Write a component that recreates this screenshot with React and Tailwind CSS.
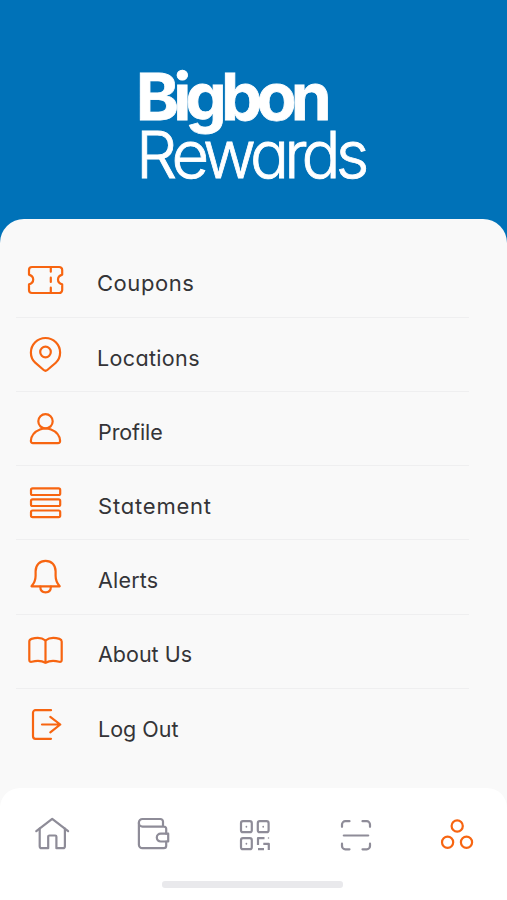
import React, { useState } from 'react';

const CouponIcon = () => (
  <>
    <path d="M6 7h27.200a3 3 0 0 1 3 3v4.600c-2.600.8-4.200 2.600-4.200 4.900s1.600 4.100 4.200 4.900v5.600a3 3 0 0 1-3 3H6a3 3 0 0 1-3-3v-5.600c2.600-.8 4.200-2.600 4.200-4.900S5.600 15.400 3 14.600V10a3 3 0 0 1 3-3z" />
    <path d="M24.800 7.700v4M24.800 17.700v4.200M24.800 27.700v4.800" />
  </>
);

const PinIcon = () => (
  <>
    <path d="M17.700 36 9.200 28.700C6.300 26.100 4.900 22.500 4.900 18.600a14.600 14.600 0 0 1 29.200 0c0 3.900-1.400 7.500-4.300 10.100L21.300 36a2.800 2.800 0 0 1-3.600 0z" />
    <circle cx="19.5" cy="18" r="5.300" />
  </>
);

const ProfileIcon = () => (
  <>
    <circle cx="19.5" cy="12.300" r="7.200" />
    <path d="M14 20.500C9 22.500 5.200 26.600 4.900 31.800c-.1 1.500.8 2.400 2.100 2.400h25c1.300 0 2.200-.9 2.100-2.400-.3-5.200-4.100-9.300-9.100-11.300-3.400-1.300-7.600-1.300-11 0z" />
  </>
);

const StatementIcon = () => (
  <>
    <rect x="5" y="5.300" width="29.200" height="6.700" rx="1.600" />
    <rect x="5" y="16.300" width="29.200" height="6.700" rx="1.600" />
    <rect x="5" y="27.500" width="29.200" height="6.700" rx="1.600" />
  </>
);

const BellIcon = () => (
  <>
    <path d="M5.500 29.300h28.200c-2.700-3-4.100-6.300-4.100-10.500v-4.600c0-6.200-4-10.400-10-10.400s-10 4.200-10 10.400v4.600c0 4.200-1.400 7.500-4.100 10.500z" />
    <path d="M14.300 29.500c0 3.700 2 5.800 5.300 5.800s5.300-2.100 5.300-5.800" />
  </>
);

const BookIcon = () => (
  <>
    <path d="M19.500 9.500C16 6.600 10 6.400 5.500 7.900c-1.400.5-2.200 1.200-2.200 2.700v18.300c0 1.600 1 2.200 2.500 1.800 4.700-1.300 9.700-1.300 13.700 1 4-2.300 9-2.300 13.700-1 1.500.4 2.500-.2 2.500-1.800V10.600c0-1.500-.8-2.200-2.200-2.700C29 6.400 23 6.600 19.500 9.500z" />
    <path d="M19.500 9.500v22" />
  </>
);

const LogoutIcon = () => (
  <>
    <path d="M25 5.200H9.500A2.500 2.500 0 0 0 7 7.700v23.600a2.500 2.500 0 0 0 2.500 2.500H25" />
    <path d="M16 19.500h18M24.300 11.800l10 7.700-10 7.800" />
  </>
);

const HomeIcon = () => (
  <>
    <path d="M4.300 17.200 20.200 4.800l15.900 12.400" />
    <path d="M7.700 14.700v17.500a2 2 0 0 0 2 2h6.500V22.700a1.200 1.200 0 0 1 1.200-1.200h5.800a1.200 1.200 0 0 1 1.200 1.200v11.500h6.500a2 2 0 0 0 2-2V14.700" />
  </>
);

const WalletIcon = () => (
  <>
    <path d="M33.200 19.700v-4.900a2.200 2.200 0 0 0-2.200-2.200H9.500a3.600 3.600 0 0 1-3.600-3.600v-.5A3.500 3.500 0 0 1 9.400 5h18a2.600 2.600 0 0 1 2.600 2.600v4.800" />
    <path d="M5.900 9v21.700a3.500 3.500 0 0 0 3.500 3.500h21.400a2.400 2.400 0 0 0 2.400-2.400v-4.300" />
    <path d="M35.200 19.700h-7.500a3.900 3.900 0 0 0 0 7.800h7.500z" />
  </>
);

const QrIcon = () => (
  <>
    <rect x="7" y="7.200" width="10.800" height="11" rx="2" />
    <rect x="23.800" y="7.200" width="10.800" height="11" rx="2" />
    <rect x="7" y="24.200" width="10.800" height="11" rx="2" />
    <path d="M12.400 12.600v.2M29.200 12.600v.2M12.400 29.600v.2" strokeWidth="1.700" />
    <path d="M24 31v-6.800h6.500M24 35.200h6M29.300 29.900h5.500v6.200" strokeLinecap="butt" />
    <path d="M34.500 23.900v.1" strokeWidth="1.500" />
  </>
);

const ScanIcon = () => (
  <>
    <path d="M7 12.800v-2.300A3.300 3.300 0 0 1 10.300 7.200h4.200M27.500 7.200h4.200A3.300 3.300 0 0 1 35 10.500v2.300M7 29.700V32a3.300 3.300 0 0 0 3.300 3.300h4.200M27.500 35.300h4.200A3.300 3.300 0 0 0 35 32v-2.300" />
    <path d="M8.800 21.500h24.400" />
  </>
);

const MoreIcon = () => (
  <>
    <circle cx="21.200" cy="12" r="5.600" />
    <circle cx="11.600" cy="28.300" r="5.600" />
    <circle cx="30.500" cy="28.300" r="5.600" />
  </>
);

const menuItems = [
  { label: 'Coupons', Icon: CouponIcon, text: 'pl-[31px] text-[22px] tracking-[0.55px]' },
  { label: 'Locations', Icon: PinIcon, text: 'pl-[31px] text-[21.500px] tracking-[0.35px]' },
  { label: 'Profile', Icon: ProfileIcon, text: 'pl-8 text-[21.500px] tracking-[-0.1px]' },
  { label: 'Statement', Icon: StatementIcon, text: 'pl-8 text-[22px] tracking-[0.8px]' },
  { label: 'Alerts', Icon: BellIcon, text: 'pl-8 text-[21.500px] tracking-[0.2px]' },
  { label: 'About Us', Icon: BookIcon, text: 'pl-8 text-[21.500px] tracking-[0px]' },
  { label: 'Log Out', Icon: LogoutIcon, text: 'pl-8 text-[21.500px] tracking-[0px]' },
];

const navItems = [
  { key: 'home', Icon: HomeIcon },
  { key: 'wallet', Icon: WalletIcon },
  { key: 'qr', Icon: QrIcon },
  { key: 'scan', Icon: ScanIcon },
  { key: 'more', Icon: MoreIcon },
];

const Glyph = ({ Icon, strokeWidth = 2.2 }) => (
  <svg
    className="w-10 h-10 shrink-0"
    viewBox="0 0 40 40"
    fill="none"
    stroke="currentColor"
    strokeWidth={strokeWidth}
    strokeLinecap="round"
    strokeLinejoin="round"
  >
    <Icon />
  </svg>
);

const App = () => {
  const [activeTab, setActiveTab] = useState('more');

  return (
    <div className="w-[507px] h-[900px] overflow-hidden flex flex-col bg-[#0072b8] font-['Inter',sans-serif] [font-feature-settings:'cv11']">
      <header className="h-[219px] shrink-0 pt-[68px] pl-[136px] text-white whitespace-nowrap">
        <h1 className="text-[65px] leading-[58px]">
          <span className="block font-bold tracking-[-5.500px] [-webkit-text-stroke:0.8px_white]">Bigbon</span>
          <span className="block font-light tracking-[-4.900px] [-webkit-text-stroke:0.8px_white]">Rewards</span>
        </h1>
      </header>

      <main className="flex-1 flex flex-col bg-[#f9f9f9] rounded-t-[24px] pt-[24.600px]">
        <ul className="flex-1">
          {menuItems.map(({ label, Icon, text }, i) => (
            <li
              key={label}
              className={`ml-4 mr-[38px] h-[74.2px] border-b ${i < menuItems.length - 1 ? 'border-[#efeff0]' : 'border-transparent'}`}
            >
              <button className="w-full h-full pl-[10px] flex items-center text-left">
                <span className="text-[#f76511]">
                  <Glyph Icon={Icon} />
                </span>
                <span className={`pt-[6.600px] leading-7 text-[#343437] ${text}`}>{label}</span>
              </button>
            </li>
          ))}
        </ul>

        <nav className="h-[112px] shrink-0 bg-white rounded-t-[20px] pt-[26px]">
          <div className="flex pl-[1.500px]">
            {navItems.map(({ key, Icon }) => (
              <button
                key={key}
                aria-label={key}
                onClick={() => setActiveTab(key)}
                className={`w-[101px] flex justify-center ${activeTab === key ? 'text-[#f76511]' : 'text-[#8e8c98]'}`}
              >
                <Glyph Icon={Icon} />
              </button>
            ))}
          </div>
          <div className="w-[181px] h-[7px] mt-[27px] ml-[162px] rounded-[3px] bg-[#e9e9ec]" />
        </nav>
      </main>
    </div>
  );
};

export default App;
